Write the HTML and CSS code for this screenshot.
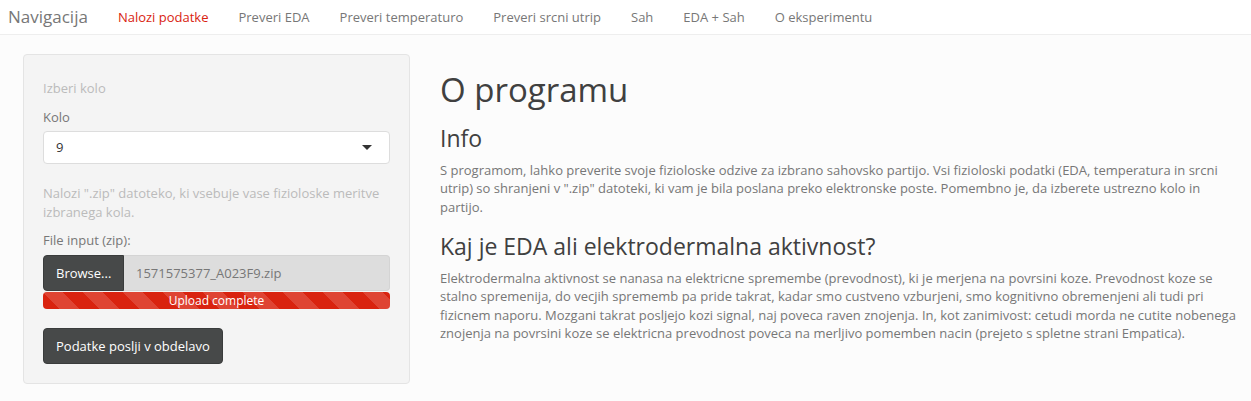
FILE: index.html
```html
<!DOCTYPE html>
<html lang="sl">
<head>
<meta charset="utf-8">
<title>Navigacija</title>
<link rel="stylesheet" href="styles.css">
</head>
<body>
<nav class="navbar">
  <span class="brand">Navigacija</span>
  <ul class="nav">
    <li class="active"><a href="#">Nalozi podatke</a></li>
    <li><a href="#">Preveri EDA</a></li>
    <li><a href="#">Preveri temperaturo</a></li>
    <li><a href="#">Preveri srcni utrip</a></li>
    <li><a href="#">Sah</a></li>
    <li><a href="#">EDA + Sah</a></li>
    <li><a href="#">O eksperimentu</a></li>
  </ul>
</nav>
<div class="page">
  <aside class="well">
    <span class="help-block">Izberi kolo</span>
    <div class="form-group">
      <label class="control-label">Kolo</label>
      <div class="select">
        <span class="select-value">9</span>
        <span class="caret"></span>
      </div>
    </div>
    <span class="help-block">Nalozi ".zip" datoteko, ki vsebuje vase fizioloske meritve izbranega kola.</span>
    <div class="form-group file-group">
      <label class="control-label">File input (zip):</label>
      <div class="input-group">
        <span class="btn btn-browse">Browse...</span>
        <span class="file-name">1571575377_A023F9.zip</span>
      </div>
      <div class="progress"><div class="progress-bar">Upload complete</div></div>
    </div>
    <button class="btn btn-default" type="button">Podatke poslji v obdelavo</button>
  </aside>
  <main class="main">
    <h1>O programu</h1>
    <h3>Info</h3>
    <p>S programom, lahko preverite svoje fizioloske odzive za izbrano sahovsko partijo. Vsi fizioloski podatki (EDA, temperatura in srcni utrip) so shranjeni v ".zip" datoteki, ki vam je bila poslana preko elektronske poste. Pomembno je, da izberete ustrezno kolo in partijo.</p>
    <h3>Kaj je EDA ali elektrodermalna aktivnost?</h3>
    <p>Elektrodermalna aktivnost se nanasa na elektricne spremembe (prevodnost), ki je merjena na povrsini koze. Prevodnost koze se stalno spremenija, do vecjih sprememb pa pride takrat, kadar smo custveno vzburjeni, smo kognitivno obremenjeni ali tudi pri fizicnem naporu. Mozgani takrat posljejo kozi signal, naj poveca raven znojenja. In, kot zanimivost: cetudi morda ne cutite nobenega znojenja na povrsini koze se elektricna prevodnost poveca na merljivo pomemben nacin (prejeto s spletne strani Empatica).</p>
  </main>
</div>
</body>
</html>
```

FILE: styles.css
```css
* { box-sizing: border-box; }
html, body { margin: 0; padding: 0; }
body {
  font-family: "Open Sans", "Liberation Sans", sans-serif;
  font-size: 13px;
  line-height: 18.57px;
  color: #777777;
  background: #fcfcfc;
}

.navbar {
  display: flex;
  align-items: center;
  height: 35px;
  background: #ffffff;
  border-bottom: 1px solid #eeeeee;
}
.brand {
  font-size: 17px;
  color: #777777;
  padding: 0 15px 0 8px;
  line-height: 34px;
}
.nav {
  display: flex;
  list-style: none;
  margin: 0;
  padding: 0 0 0 0;
}
.nav a {
  display: block;
  padding: 0 15px;
  line-height: 34px;
  color: #777777;
  text-decoration: none;
}
.nav .active a { color: #d9230f; }

.page {
  display: flex;
  align-items: flex-start;
  padding: 19px 0 0 23px;
  gap: 30px;
}

.well {
  flex: 0 0 387px;
  background: #f4f4f4;
  border: 1px solid #e4e4e4;
  border-radius: 4px;
  padding: 19px;
  display: flex;
  flex-direction: column;
  align-items: flex-start;
}
.help-block {
  display: block;
  color: #bbbbbb;
  margin: 5px 0 10px;
}
.form-group {
  width: 100%;
  margin-bottom: 15px;
}
.control-label {
  display: block;
  margin-bottom: 5px;
  font-weight: normal;
  color: #777777;
}
.select {
  display: flex;
  align-items: center;
  justify-content: space-between;
  height: 33px;
  padding: 0 17px 0 12px;
  background: #ffffff;
  border: 1px solid #dddddd;
  border-radius: 4px;
  color: #333333;
}
.caret {
  width: 0;
  height: 0;
  border-left: 5px solid transparent;
  border-right: 5px solid transparent;
  border-top: 5px solid #333333;
}

.input-group {
  display: flex;
  height: 36px;
}
.btn {
  display: inline-flex;
  align-items: center;
  font-family: inherit;
  font-size: 13px;
  line-height: 18.57px;
  color: #ffffff;
  background: #474949;
  border: 1px solid #3a3c3c;
  border-radius: 4px;
  padding: 8px 12px;
  cursor: pointer;
}
.btn-browse {
  border-radius: 4px 0 0 4px;
  width: 81px;
}
.file-name {
  flex: 1;
  display: flex;
  align-items: center;
  padding: 0 12px;
  background: #dddddd;
  border: 1px solid #d4d4d4;
  border-left: 0;
  border-radius: 0 4px 4px 0;
  color: #777777;
}
.progress {
  margin-top: 1px;
  height: 17px;
  border-radius: 4px;
  overflow: hidden;
  background: #e6e6e6;
}
.progress-bar {
  height: 100%;
  width: 100%;
  background-color: #d9230f;
  background-image: linear-gradient(45deg, rgba(255,255,255,.15) 25%, transparent 25%, transparent 50%, rgba(255,255,255,.15) 50%, rgba(255,255,255,.15) 75%, transparent 75%, transparent);
  background-size: 40px 40px;
  color: #ffffff;
  text-align: center;
  font-size: 12px;
  line-height: 17px;
}
.file-group { margin-bottom: 19px; }
.btn-default { height: 36px; }

.main {
  flex: 1;
  padding-right: 7px;
}
h1, h3 {
  font-family: "Open Sans", "Liberation Sans", sans-serif;
  font-weight: normal;
  color: #404040;
  line-height: 1.1;
}
h1 {
  font-size: 33px;
  margin: 18px 0 9px;
}
h3 {
  font-size: 23px;
  margin: 18px 0 9px;
}
p { margin: 0 0 9px; }
```
